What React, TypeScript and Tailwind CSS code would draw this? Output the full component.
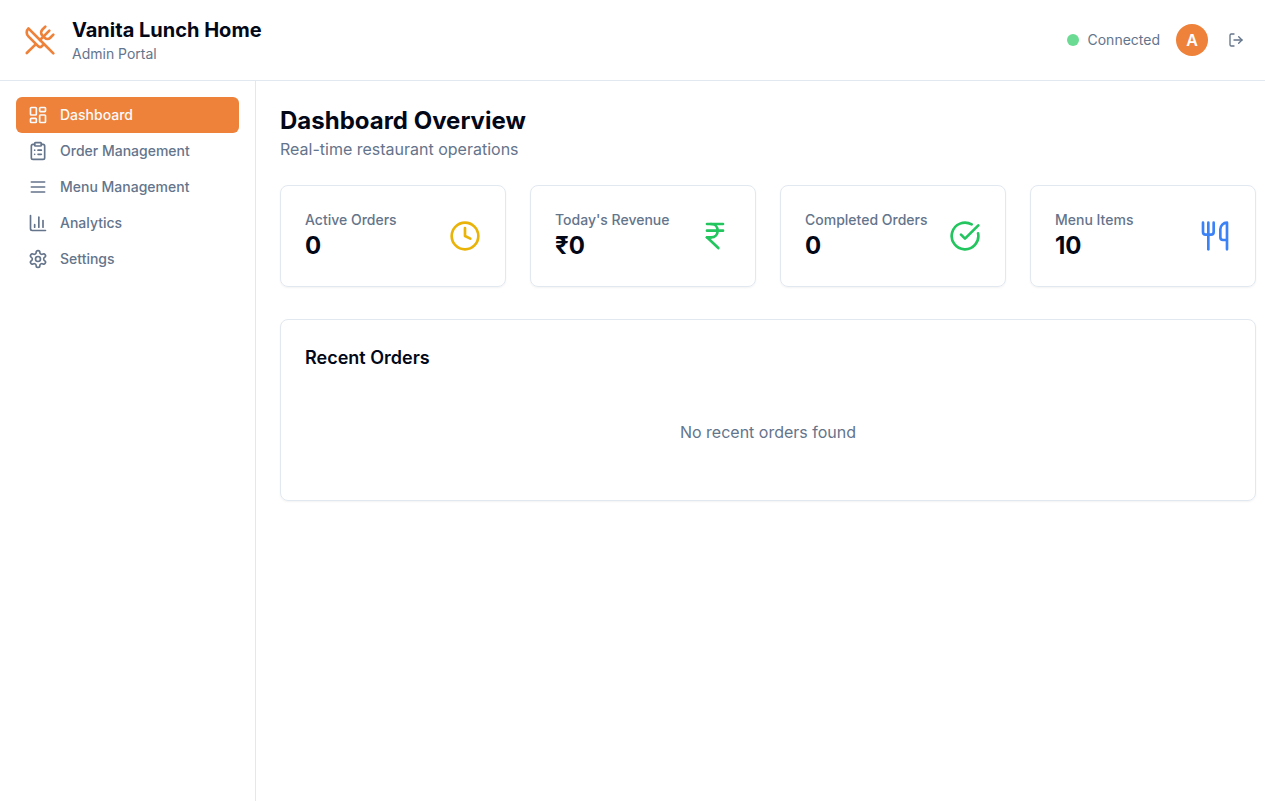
import type { ReactNode } from "react";
import {
  UtensilsCrossed,
  LogOut,
  LayoutDashboard,
  ClipboardList,
  BarChart3,
  Clock,
  IndianRupee,
  CircleCheckBig,
  Utensils,
} from "lucide-react";

function Stroke({ className, children }: { className?: string; children: ReactNode }) {
  return (
    <svg
      viewBox="0 0 24 24"
      fill="none"
      stroke="currentColor"
      strokeWidth="2"
      strokeLinecap="round"
      strokeLinejoin="round"
      className={className}
    >
      {children}
    </svg>
  );
}

function Menu({ className }: { className?: string }) {
  return (
    <Stroke className={className}>
      <path d="M4 6h16M4 12h16M4 18h16" />
    </Stroke>
  );
}

function Settings({ className }: { className?: string }) {
  return (
    <Stroke className={className}>
      <path d="M12.22 2h-.44a2 2 0 0 0-2 2v.18a2 2 0 0 1-1 1.73l-.43.25a2 2 0 0 1-2 0l-.15-.08a2 2 0 0 0-2.73.73l-.22.38a2 2 0 0 0 .73 2.73l.15.1a2 2 0 0 1 1 1.72v.51a2 2 0 0 1-1 1.74l-.15.09a2 2 0 0 0-.73 2.73l.22.38a2 2 0 0 0 2.73.73l.15-.08a2 2 0 0 1 2 0l.43.25a2 2 0 0 1 1 1.73V20a2 2 0 0 0 2 2h.44a2 2 0 0 0 2-2v-.18a2 2 0 0 1 1-1.73l.43-.25a2 2 0 0 1 2 0l.15.08a2 2 0 0 0 2.73-.73l.22-.39a2 2 0 0 0-.73-2.73l-.15-.08a2 2 0 0 1-1-1.74v-.5a2 2 0 0 1 1-1.74l.15-.09a2 2 0 0 0 .73-2.73l-.22-.38a2 2 0 0 0-2.73-.73l-.15.08a2 2 0 0 1-2 0l-.43-.25a2 2 0 0 1-1-1.73V4a2 2 0 0 0-2-2z" />
      <circle cx="12" cy="12" r="3" />
    </Stroke>
  );
}

const nav = [
  { label: "Dashboard", icon: LayoutDashboard, active: true },
  { label: "Order Management", icon: ClipboardList, active: false },
  { label: "Menu Management", icon: Menu, active: false },
  { label: "Analytics", icon: BarChart3, active: false },
  { label: "Settings", icon: Settings, active: false },
];

const stats = [
  { label: "Active Orders", value: "0", icon: Clock, color: "text-[#eab308]" },
  { label: "Today's Revenue", value: "₹0", icon: IndianRupee, color: "text-[#22c55e]" },
  { label: "Completed Orders", value: "0", icon: CircleCheckBig, color: "text-[#22c55e]" },
  { label: "Menu Items", value: "10", icon: Utensils, color: "text-[#3b82f6]" },
];

export default function App() {
  return (
    <div className="h-screen overflow-hidden bg-white font-['Inter',sans-serif] text-[#020817]">
      <div className="flex h-full w-[1280px] flex-col">
        <header className="flex h-[81px] shrink-0 items-center justify-between border-b border-[#e2e8f0] px-6">
          <div className="flex items-center gap-4">
            <UtensilsCrossed className="size-8 text-[#ee823a]" />
            <div>
              <h1 className="text-xl font-bold">Vanita Lunch Home</h1>
              <p className="text-sm text-[#64748b]">Admin Portal</p>
            </div>
          </div>
          <div className="flex items-center gap-4">
            <div className="flex items-center gap-2">
              <span className="size-3 rounded-full bg-[#6bdb94]" />
              <span className="text-sm text-[#64748b]">Connected</span>
            </div>
            <div className="flex items-center gap-2">
              <div className="flex size-8 items-center justify-center rounded-full bg-[#ee823a] font-semibold text-white">
                A
              </div>
              <button className="flex h-9 items-center px-3 text-[#64748b]">
                <LogOut className="size-4" />
              </button>
            </div>
          </div>
        </header>
        <div className="flex min-h-0 flex-1">
          <aside className="w-64 shrink-0 border-r border-[#e2e8f0] p-4">
            <nav>
              {nav.map(({ label, icon: Icon, active }) => (
                <a
                  key={label}
                  className={`flex h-9 items-center gap-3 rounded-md px-3 text-sm font-medium ${
                    active ? "bg-[#ee823a] text-[#f8fafc]" : "text-[#64748b]"
                  }`}
                >
                  <Icon className="size-5" />
                  {label}
                </a>
              ))}
            </nav>
          </aside>
          <main className="flex-1 p-6">
            <h2 className="text-2xl font-bold">Dashboard Overview</h2>
            <p className="text-[#64748b]">Real-time restaurant operations</p>
            <div className="mt-6 grid grid-cols-4 gap-6">
              {stats.map(({ label, value, icon: Icon, color }) => (
                <section
                  key={label}
                  className="flex items-center justify-between rounded-lg border border-[#e2e8f0] p-6 shadow-xs"
                >
                  <div>
                    <p className="text-sm font-medium text-[#64748b]">{label}</p>
                    <p className="text-2xl font-bold">{value}</p>
                  </div>
                  <Icon className={`size-8 ${color}`} />
                </section>
              ))}
            </div>
            <section className="mt-8 rounded-lg border border-[#e2e8f0] p-6 shadow-xs">
              <h3 className="text-lg font-semibold">Recent Orders</h3>
              <p className="pt-12 pb-8 text-center text-[#64748b]">No recent orders found</p>
            </section>
          </main>
        </div>
      </div>
    </div>
  );
}
